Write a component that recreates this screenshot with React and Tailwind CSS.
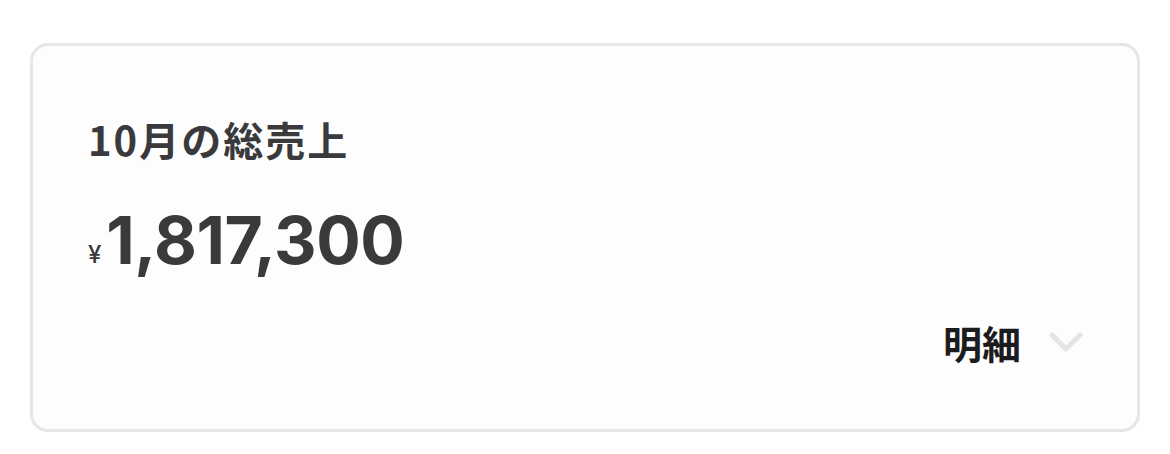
import React from 'react';

const ChevronDown = () => (
  <svg width="34" height="22" viewBox="0 0 34 22" fill="none" className="block">
    <path d="M3 3 L17 17 L31 3" stroke="#e4e4e4" strokeWidth="5" strokeLinecap="round" strokeLinejoin="round" />
  </svg>
);

const App = () => {
  return (
    <div className="w-[1170px] h-[454px] bg-white pt-[43px] pl-[30px]" style={{ fontFamily: '"Noto Sans CJK JP", sans-serif' }}>
      {/* 売上カード */}
      <div className="w-[1110px] h-[389px] rounded-[18px] border-[3px] border-[#e6e6e6] bg-[#fdfdfd] pl-[55px] pr-[54px] pt-[69px]">
        <h2 className="text-[40px] leading-[48px] font-bold text-[#3a3a3c] tracking-[2px]">10月の総売上</h2>

        <div className="flex items-end mt-[42px] text-[#3a3a3c]" style={{ fontFamily: 'Inter, "Noto Sans CJK JP", sans-serif' }}>
          <span className="text-[24px] leading-[30px] mb-[5px] mr-[5px] font-medium">¥</span>
          <span className="text-[66px] leading-[70px] font-bold tracking-[-0.5px]">1,817,300</span>
        </div>

        <div className="flex items-center justify-end mt-[44px]">
          <span className="text-[39px] leading-[46px] font-bold text-[#1c1c1e]">明細</span>
          <span className="ml-[28px] mt-[2px]"><ChevronDown /></span>
        </div>
      </div>
    </div>
  );
};

export default App;
